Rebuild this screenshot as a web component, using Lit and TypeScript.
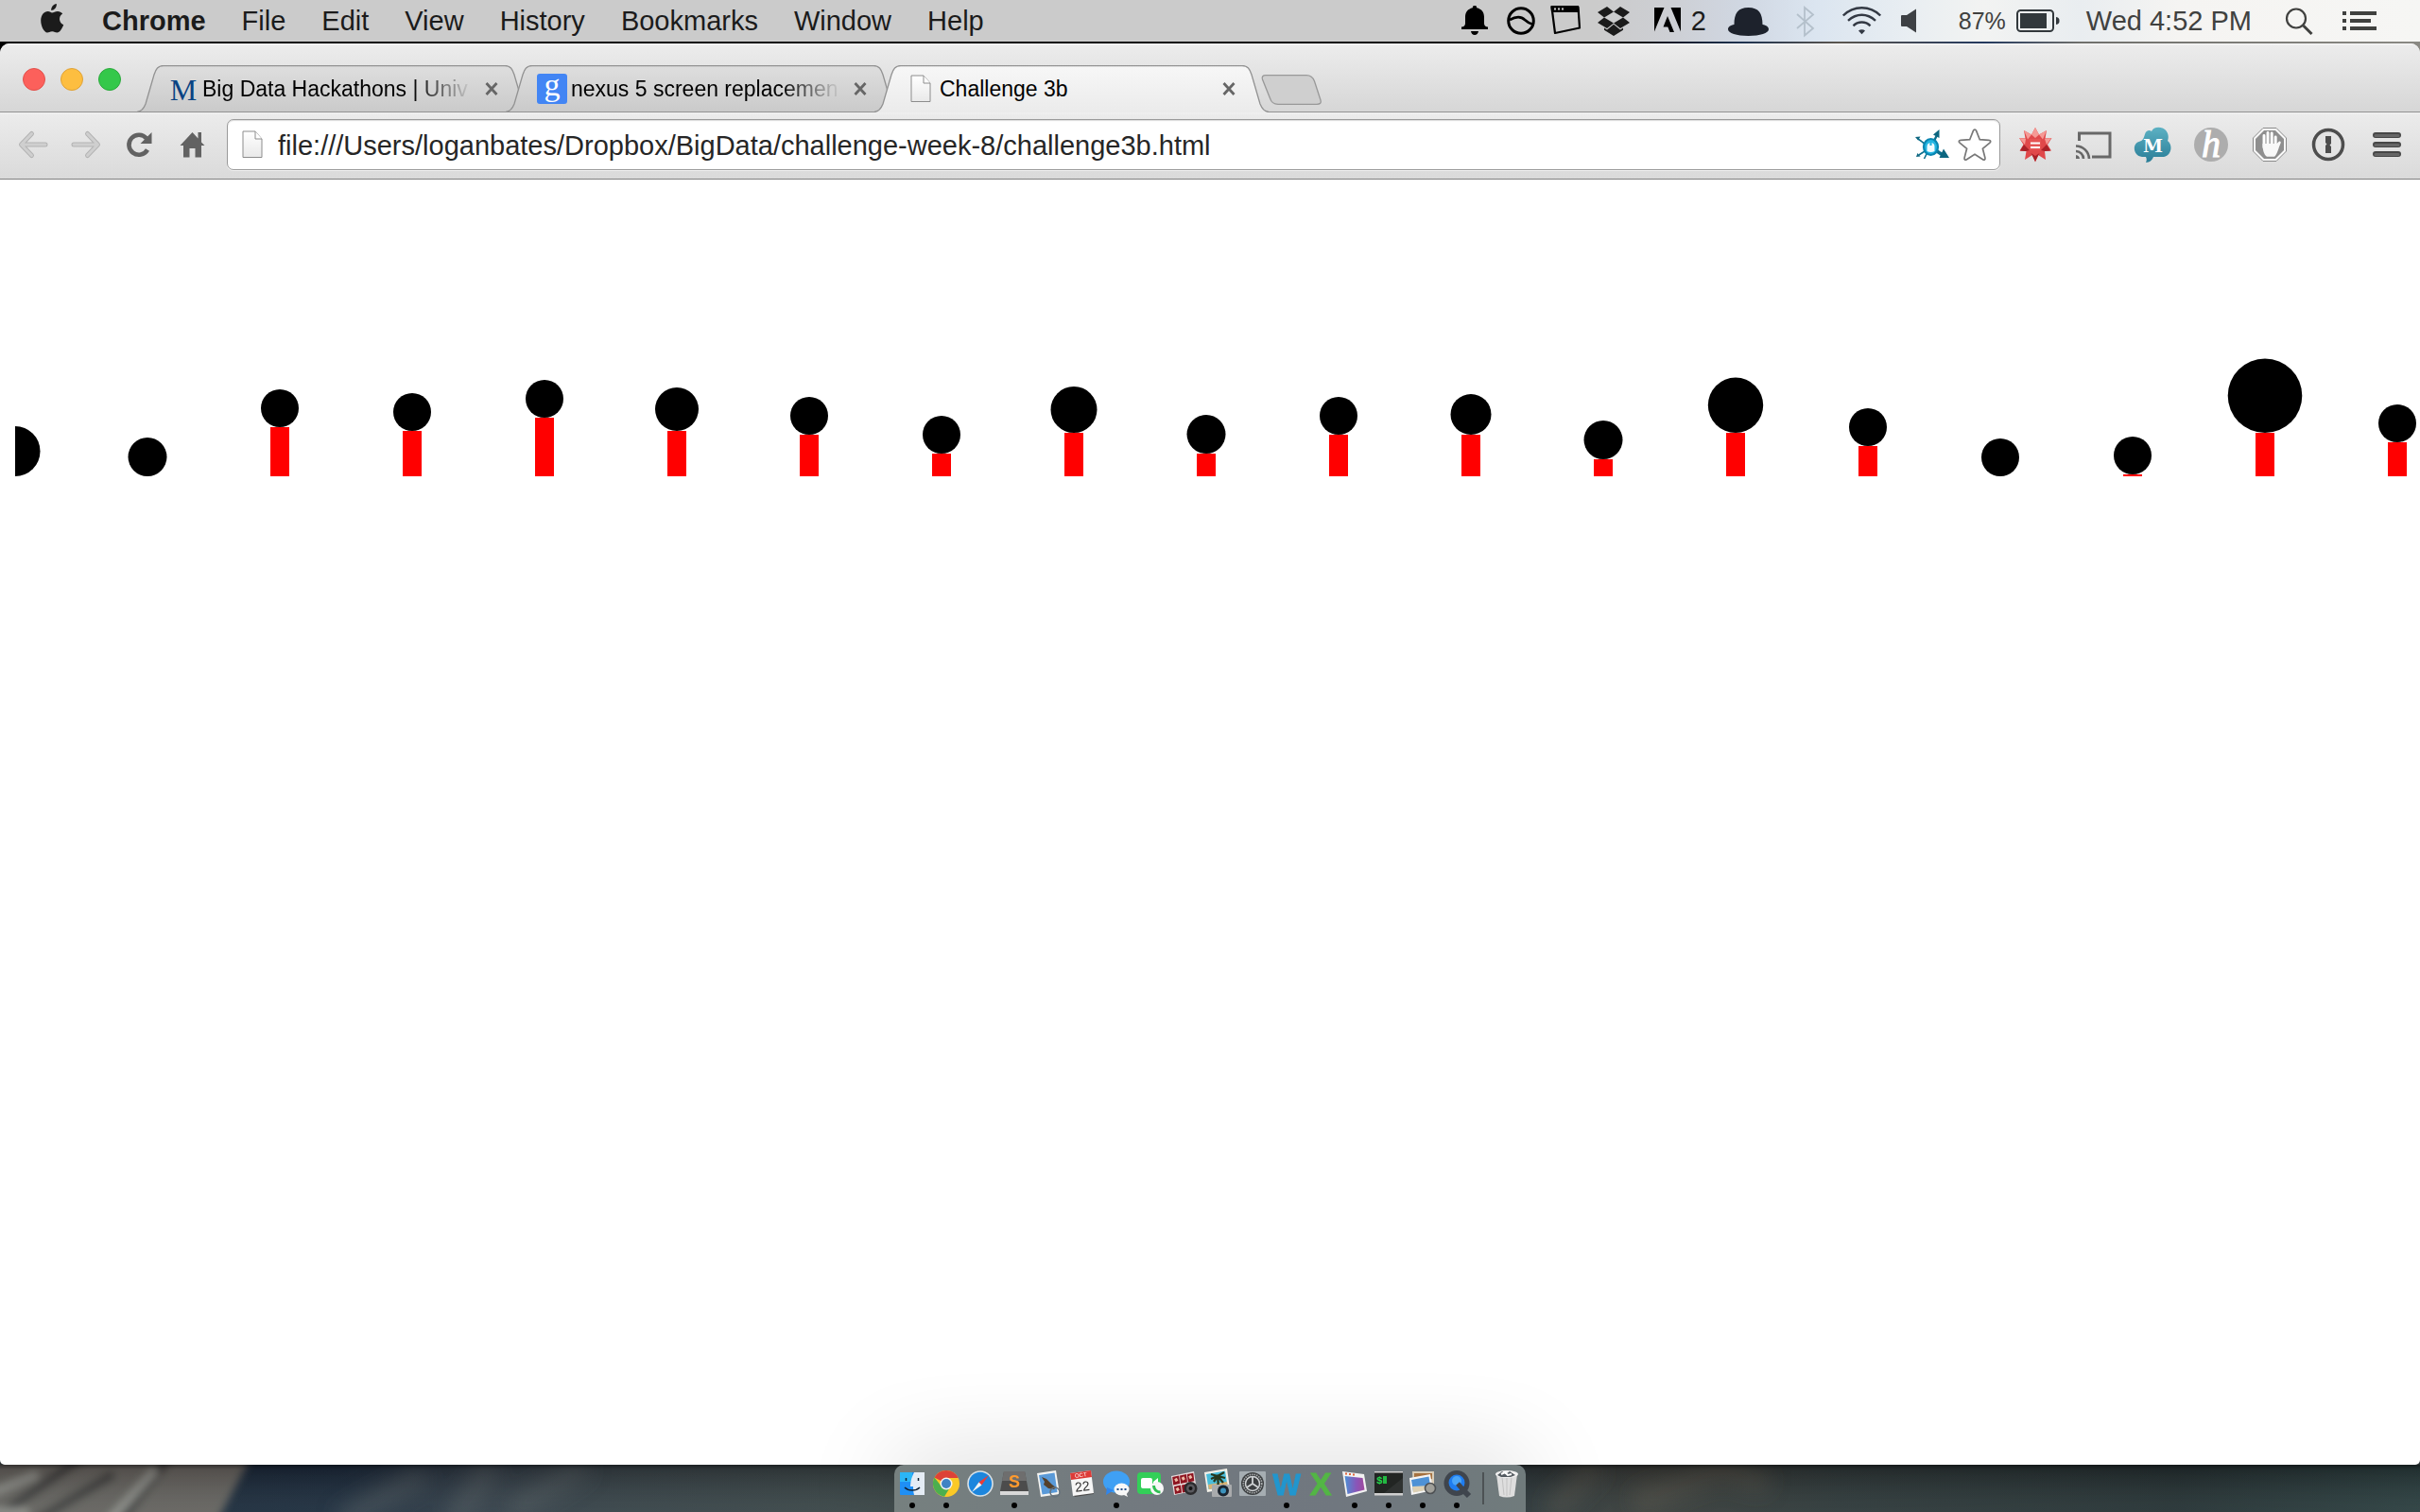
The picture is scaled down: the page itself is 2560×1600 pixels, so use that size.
import { LitElement, html, svg, css } from "lit";
import type { TemplateResult, SVGTemplateResult } from "lit";
import { customElement, property } from "lit/decorators.js";
import { classMap } from "lit/directives/class-map.js";

/** Inline icon whose view box has the same size as the drawn box. */
const icon = (w: number, h: number, body: SVGTemplateResult): TemplateResult =>
  html`<svg class="icon" width=${w} height=${h} viewBox="0 0 ${w} ${h}" aria-hidden="true">${body}</svg>`;

/* ---------- Menu bar ---------- */

const apple = icon(24, 44, svg`<g fill="#1b1b1b">
  <path d="M12 13.500c1.700 0 3.400-1.600 6-1.600 2 0 4 1 5.200 2.700-4.800 2.900-3.900 9.700 1 11.600-1.300 3.700-4 8.300-6.800 8.300-2 0-2.700-1.300-5.200-1.300s-3.400 1.300-5.200 1.300C3.800 34.500.2 28 .2 21.800c0-6.200 3.700-9.900 7.400-9.900 2.100 0 3.500 1.600 4.400 1.600z"/>
  <path d="M16.800 4c.4 3.800-2.600 7-5.600 7C10.800 7.600 13.600 4.400 16.800 4z"/></g>`);

const bell = icon(28, 44, svg`<path d="M14 6a2 2 0 0 1 2.200 2.200C21.500 9.500 24 13 24 18v7c0 2 1.500 3.300 4 3.500V31H0v-2.500C2.500 28.300 4 27 4 25v-7c0-5 2.500-8.500 7.800-9.800A2 2 0 0 1 14 6zM10 33h8c-.4 2.400-2 4-4 4s-3.600-1.600-4-4z"/>`);
const orbit = icon(30, 44, svg`<g fill="none" stroke="#000"><circle cx="17" cy="22" r="13.300" stroke-width="3"/><path d="M5 21c7-4 12-4 16 0 3 3 6 4 9 5" stroke-width="2.600"/></g>`);
const panel = icon(32, 44, svg`<path d="M1.500 7.500h28l1.500 22L5 35z" fill="none" stroke="#000" stroke-width="2.200" stroke-linejoin="round"/><path d="M.5 6h29.500l.5 7H1z"/><path d="M4 9.500h2M8 9.500h2M12 9.500h2" stroke="#ccc" stroke-width="2"/>`);
const dropbox = icon(42, 44, svg`<path fill="#1b1b1b" d="M10 7l7 5.500-10 6L0 13zM24 7l-7 5.500 10 6 7-5.500zM0 24l7-5.500 10 6L10 30zM34 24l-7-5.500-10 6 7 5.500zM17 25.800l7 5.600 3-1.900v2.200L17 38 7 31.700v-2.200l3 1.900z"/>`);
const adobe = icon(28, 44, svg`<path d="M0 8h10.500L0 33.500zM17.500 8H28v25.500zM14 17l7 17h-4.500l-2.200-5.500H9.500z"/>`);
const hat = icon(59, 44, svg`<path fill="#1d222c" d="M11.500 26c0-12 4-18 15-18s15 6 15 18c4 .5 6.500 2.500 6.500 5 0 4-9 7-21.500 7S5 35 5 31c0-2.500 2.500-4.500 6.500-5z"/>`);
const bluetooth = icon(31, 44, svg`<path d="M1 15l17 15-9 7.500V8l9 7.500-17 14.500" fill="none" stroke="#b4c0cb" stroke-width="1.800"/>`);
const wifi = icon(44, 44, svg`<g fill="none" stroke="#333944" stroke-width="2.400"><path d="M.8 16.500c11-11 28.400-11 39.400 0M6 21.800c9-8 20-8 29 0M11.500 27.300c5-5 13-5 18 0"/></g><path d="M17 32.500c2-1.800 5-1.800 7 0l-3.500 3.800z" fill="#333944"/>`);
const speaker = icon(43, 44, svg`<path fill="#3d4044" d="M0 17q0-1 1-1h5l10-6.500v25L6 28H1q-1 0-1-1z"/>`);
const battery = icon(56, 44, svg`<rect x="1" y="11" width="38" height="22" rx="3.500" fill="none" stroke="#32383c" stroke-width="2"/><rect x="4" y="14" width="28" height="16" fill="#32383c"/><path fill="#32383c" d="M42 18c3 .5 3.500 2 3.500 4s-.5 3.500-3.500 4z"/>`);
const search = icon(60, 44, svg`<g fill="none" stroke="#40413f"><circle cx="29" cy="19.500" r="10" stroke-width="2.200"/><path d="M36.500 27l9 9" stroke-width="3"/></g>`);
const list = icon(36, 44, svg`<path stroke="#40413f" stroke-width="4" d="M0 14h4M8 14h28M0 22h4M8 22h22M0 30h4M8 30h28"/>`);

/* ---------- Browser chrome ---------- */

const umich = icon(32, 32, svg`<text x="16" y="28" text-anchor="middle" font-family="Liberation Serif, serif" font-size="32" fill="#0a4383">M</text>`);
const google = icon(32, 32, svg`<rect width="32" height="32" rx="3" fill="#4285f4"/><text x="16" y="23" text-anchor="middle" font-family="Liberation Serif, serif" font-size="34" fill="#fff">g</text>`);
const pageShape = svg`<path d="M1 1h13l7 8v19.500H1z" fill="url(#pg)" stroke="#8c8c8c"/><path d="M14 1v8h7" fill="#fff" stroke="#8c8c8c"/><defs><linearGradient id="pg" x2="0" y2="1"><stop stop-color="#fff"/><stop offset="1" stop-color="#e9e9e9"/></linearGradient></defs>`;
const page = icon(22, 30, pageShape);
const pageFavicon = icon(32, 30, svg`<g transform="translate(5 0)">${pageShape}</g>`);
const close = icon(16, 16, svg`<path d="M2.500 2l11 12M13.500 2l-11 12" stroke="#666" stroke-width="2.800"/>`);

const back = icon(32, 32, svg`<path d="M13.500 4.500L2.500 16l11 11.500M3 16h25" fill="none" stroke="#b4b4b4" stroke-width="5" stroke-linecap="round" stroke-linejoin="round"/><path d="M13.500 4.500L2.500 16l11 11.500M3 16h25" fill="none" stroke="#cfcfcf" stroke-width="3" stroke-linecap="round" stroke-linejoin="round"/>`);
const forward = icon(32, 32, svg`<path d="M16.500 4.500l11 11.500-11 11.500M27 16H2" fill="none" stroke="#b4b4b4" stroke-width="5" stroke-linecap="round" stroke-linejoin="round"/><path d="M16.500 4.500l11 11.500-11 11.500M27 16H2" fill="none" stroke="#cfcfcf" stroke-width="3" stroke-linecap="round" stroke-linejoin="round"/>`);
const reload = icon(32, 32, svg`<path d="M24 21.500a10.500 10.500 0 1 1-1-12" fill="none" stroke="#626262" stroke-width="4.600"/><path d="M28.500 3v12H16.500z" fill="#626262"/>`);
const home = icon(32, 32, svg`<path fill="#626262" d="M15.500 3l6 6.500V3H25v10.500l3.500 3.500H25v12.500h-6.500V20h-6v9.500H6V17H2.500z"/>`);

const mouse = icon(36, 34, svg`<g stroke="#0d6f8d" fill="none" stroke-width="1.600"><path d="M10 16L3 11M10 24l-6 4M12 27l-2.500 5"/><path d="M20 13l3-6" stroke-width="2.400"/><path d="M23 24l6 4" stroke-width="3.600"/></g><path fill="#0d6680" d="M25.500 1v9L19 6.500zM0 9l5.500-.5L3 12.500zM1 30l1.500-4 3 3.500zM30 21.500L36 31H25.500z"/><ellipse cx="16.500" cy="19.500" rx="7.500" ry="8.500" fill="#23b5e2" stroke="#0885b0" stroke-width="2.200"/><path d="M12.500 24v-5c0-5.500 8-5.500 8 0v5q-4 2-8 0z" fill="#f0fbff"/><path d="M16.500 15v3" stroke="#27b3df" stroke-width="2.200"/>`);
const star = icon(36, 36, svg`<path d="M18 2.200c.8 0 1.300.5 1.600 1.200l3.700 9.300 9.600.6c2 .1 2.400 1.600 1 2.800l-7.500 6.200 2.500 9.700c.5 1.900-.9 2.700-2.400 1.700L18 28.300l-8.500 5.400c-1.500 1-2.900.2-2.400-1.700l2.500-9.700-7.500-6.200c-1.400-1.200-1-2.700 1-2.800l9.600-.6 3.700-9.300c.3-.7.8-1.200 1.600-1.200z" fill="#fff" stroke="#787878" stroke-width="1.700"/>`);

const burst = icon(38, 38, svg`<path fill="#e0484a" d="M19 1l4 7.500L31 4l-1.500 8.500 7-.5-4.500 7 4 6.500-7 .5 1 9-8-5-3 7.500-3-7.500-8 5 1.500-9-7-.5 4-6.500-4.500-7 6.500.5L7 4l8 4.500z"/><path fill="#f59a95" d="M19 1l4 7.500-4 3.500-4-3.500zM7 4l8 4.500-4 5zM31 4l-8 4.500 4 5zM2 12l7 1-1 6zM36 12l-7 1 2 6z"/><path fill="#a92128" d="M7 19l6 6-4 1-6-.5zM31 19l-6 6 4 1 6-.5zM14.500 28l4.500 9 4.500-9-4.500 3z"/><rect x="13" y="13" width="12" height="12" fill="#e55353"/><path d="M14 17.500h10M14 22h10" stroke="#fff" stroke-width="2.200"/>`);
const cast = icon(38, 38, svg`<g fill="none" stroke="#686868" stroke-width="3"><path d="M3.500 15V7H36v25H17"/></g><g fill="none" stroke="#686868" stroke-width="2.600"><path d="M0 20.500A14 14 0 0 1 14 34M0 26a8 8 0 0 1 8 8"/></g><path d="M0 30a4.500 4.500 0 0 1 4 4H0z" fill="#686868"/>`);
const cloud = icon(38, 38, svg`<defs><linearGradient id="sea" gradientUnits="userSpaceOnUse" x1="0" y1="0" x2="0" y2="38"><stop stop-color="#5db2c4"/><stop offset="1" stop-color="#2a7d97"/></linearGradient></defs><path fill="url(#sea)" d="M11 8c1-4 5-5 7-3 2-6 14-6 17 2 1 3 1 5 0 8 6 4 4 16-4 17H20c-1 3-4 6-8 6 1-2 1-4 0-6H8C-2 31-3 17 6 15.500c3-1 4-4 5-7.500z"/><text x="19.500" y="26.500" text-anchor="middle" font-family="DejaVu Serif, serif" font-weight="700" font-size="19" fill="#fff">M</text>`);
const letterH = icon(38, 38, svg`<circle cx="19" cy="19" r="18" fill="#adadad"/><text x="19" y="32" text-anchor="middle" font-family="Liberation Serif, serif" font-style="italic" font-size="40" fill="#fff" stroke="#fff">h</text>`);
const stop = icon(38, 38, svg`<path d="M12 1.500h14L36.500 12v14L26 36.500H12L1.500 26V12z" fill="#fafafa" stroke="#8a8a8a"/><path d="M13 4h12l9 9v12l-9 9H13l-9-9V13z" fill="#8f8f8f"/><path d="M13 22V9.500M17 20V6.500M21.200 20V7M25.200 21v-10" stroke="#fff" stroke-width="2.900" stroke-linecap="round"/><path d="M11.500 18h15l2-2c1.500-1.200 3 0 2 1.800-2 4-3.500 12-6.500 14h-8c-3.500-2.500-4.500-8-4.500-13.800z" fill="#f8f8f8"/>`);
const onePassword = icon(38, 38, svg`<circle cx="19" cy="19" r="15.500" fill="#e4e4e4" stroke="#4d4d4d" stroke-width="3.500"/><path fill="#4d4d4d" d="M16 10h6v8l-1.500 1.500L22 21v7h-6v-8l1.500-1.500L16 17z"/>`);
const menu = icon(38, 38, svg`<path d="M7 9h24M7 19h24M7 29h24" stroke="#464646" stroke-width="6" stroke-linecap="round"/><path d="M7 9.500h24M7 19.500h24M7 29.500h24" stroke="#666" stroke-width="3" stroke-linecap="round"/>`);

/* ---------- Dock ---------- */

interface DockApp { name: string; running: boolean; art: SVGTemplateResult }

const dockApps: DockApp[] = [
  { name: "Finder", running: true, art: svg`<rect x="1" y="2" width="26" height="24" rx="1" fill="#1f8ff5"/><rect x="1" y="2" width="13" height="10" fill="#2bb6f6"/><path d="M16 2h11v24H16c-1-4-1-7-1-9h-3c0-6 2-11 4-15z" fill="#e4ecf5"/><path d="M7.500 8v3M20.500 8v3M6 18c4 4 12 4 16 0" stroke="#123" stroke-width="1.500" fill="none"/>` },
  { name: "Chrome", running: true, art: svg`<circle cx="14" cy="14" r="14" fill="#fbc926"/><path d="M14 0a14 14 0 0 1 12.600 8H14v6L1.500 7.500A14 14 0 0 1 14 0z" fill="#dd4237"/><path d="M1.500 7.500A14 14 0 0 0 12 27.800L18 18l-9-1z" fill="#4caf4f"/><circle cx="14" cy="14" r="6.500" fill="#f3f3f3"/><circle cx="14" cy="14" r="5" fill="#3f83c4"/>` },
  { name: "Safari", running: false, art: svg`<circle cx="14" cy="14" r="13.800" fill="#d9e1e6"/><circle cx="14" cy="14" r="12.200" fill="#1d86dd"/><path d="M23 5l-7.500 10.500-3-3z" fill="#ee3b36"/><path d="M5 23l7.500-10.500 3 3z" fill="#f4f4f4"/>` },
  { name: "Sublime Text", running: true, art: svg`<path d="M3 1h22l4 21H-1z" fill="#4c4c4c"/><path d="M-1 22h30v4H-1z" fill="#d8d8d8"/><path d="M3 1h22l2 10H1z" fill="#6e6e6e"/><text x="14" y="18" text-anchor="middle" font-family="Liberation Sans, sans-serif" font-weight="700" font-size="18" fill="#ff9a2e">S</text>` },
  { name: "Mail", running: false, art: svg`<path d="M2 3l20-3 4 25-20 3z" fill="#f4f4f2"/><path d="M4 5l16.500-2.500 3 20.500-16 2.500z" fill="#5a9ad8"/><path d="M7 7l5 2 6 6 4 3-2 2-6-1-5-4 1-3z" fill="#54402b"/><circle cx="21" cy="23" r="5" fill="none" stroke="#66727c" stroke-width="1.500"/>` },
  { name: "Calendar", running: false, art: svg`<path d="M4 25l22-3v3l-20 3z" fill="#4c4c4c"/><path d="M1 3l22-3 3 24-22 3z" fill="#f6f6f6"/><path d="M1 3l22-3 1 7-22 3z" fill="#dd3b37"/><text x="12.500" y="7" text-anchor="middle" font-family="Liberation Sans, sans-serif" font-size="6" fill="#fff" transform="rotate(-7 12 7)">OCT</text><text x="14" y="22" text-anchor="middle" font-family="Liberation Sans, sans-serif" font-size="14" fill="#333" transform="rotate(-7 13 17)">22</text>` },
  { name: "Messages", running: true, art: svg`<ellipse cx="14" cy="12" rx="14" ry="11.500" fill="#3fa0f4"/><path d="M4 18l-1 8 8-5z" fill="#2f86ee"/><ellipse cx="19.500" cy="20" rx="8" ry="6.500" fill="#f8f8f8"/><path d="M24 23l2 5-6-3z" fill="#f8f8f8"/><path d="M14.500 20h2M18.500 20h2M22.500 20h2" stroke="#24508c" stroke-width="2.200"/>` },
  { name: "FaceTime", running: false, art: svg`<rect y="2" width="25" height="23" rx="4" fill="#33cf58"/><rect x="4" y="8" width="12" height="11" rx="2" fill="#fff"/><path d="M17 12l5-4v10l-5-4z" fill="#fff"/><circle cx="21" cy="19" r="7" fill="#f7f7f7"/><path d="M17.500 16c0 4 3 7 7 7" fill="none" stroke="#30be52" stroke-width="3"/>` },
  { name: "Photo Booth", running: false, art: svg`<path d="M0 6l24-5 3 20-24 5z" fill="#e8dcdc"/><path d="M1.200 7l7-1.400 1 8.500-7 1.400zM9 5.500l7-1.400 1 8.500-7 1.400zM16.800 4l6.500-1.300 1 8.500-6.500 1.300zM3 17l7-1.400 1 8-7 1.400zM11 15.500l7-1.400 1 8-7 1.400z" fill="#8e1420"/><path d="M4.500 8.500l1.500 3M12 7l1.500 3M19.500 5.500l1.500 3M6 18.500l1.500 3" stroke="#edbba5" stroke-width="3"/><circle cx="20.500" cy="19" r="7" fill="#2b2b2d"/><circle cx="20.500" cy="19" r="4.500" fill="#59595e"/><circle cx="20.500" cy="19" r="2" fill="#111"/>` },
  { name: "iPhoto", running: false, art: svg`<path d="M-1 2l24-4 3 21-24 4z" fill="#f3f1e9"/><path d="M1 4l20-3.500 2.500 16-20 3.500z" fill="#49bddb"/><path d="M3 15l20-3 .8 4.500-20 3.500z" fill="#d8b273"/><path d="M13 20c1-6 1-9 0-14M6 9l7-3 8 2M6 4l7 2 7-4M9 12l4-6 6 7" fill="none" stroke="#26371d" stroke-width="2.300"/><rect x="7" y="15" width="21" height="13" rx="1" fill="#a9abad"/><circle cx="19" cy="21.500" r="6" fill="#1a2530"/><circle cx="19" cy="21.500" r="3" fill="#3c93bd"/>` },
  { name: "System Preferences", running: false, art: svg`<rect y="1" width="28" height="26" rx="1" fill="#a5adb2"/><circle cx="14" cy="14" r="12" fill="#3c3f41"/><circle cx="14" cy="14" r="9.800" fill="none" stroke="#a8abad" stroke-width="1.600" stroke-dasharray="1.500 1"/><circle cx="14" cy="14" r="7.500" fill="none" stroke="#d0d3d5" stroke-width="1.500"/><path d="M14 14V7M14 14l-6 4M14 14l6 4" stroke="#d0d3d5" stroke-width="1.800"/>` },
  { name: "Word", running: true, art: svg`<text x="14" y="26" text-anchor="middle" font-family="Liberation Sans, sans-serif" font-weight="700" font-size="31" fill="#2196ce" stroke="#2196ce">W</text>` },
  { name: "Excel", running: false, art: svg`<text x="14" y="26" text-anchor="middle" font-family="Liberation Sans, sans-serif" font-weight="700" font-size="34" fill="#53b645" stroke="#53b645">X</text>` },
  { name: "CleanMyMac", running: true, art: svg`<defs><linearGradient id="glow"><stop stop-color="#4b8fd4"/><stop offset=".6" stop-color="#8a55b8"/><stop offset="1" stop-color="#a04a9c"/></linearGradient></defs><path d="M1 1l23 3 3 18-22 6z" fill="#f2f2f2"/><path d="M3.500 6l19 2 2 12.500-18 4.500z" fill="url(#glow)"/><path d="M4 3.500h2M8 4h2M12 4.500h2" stroke="#e0653c" stroke-width="2"/>` },
  { name: "Terminal", running: true, art: svg`<rect x="-1" y="2" width="30" height="22" fill="#222523"/><path d="M9 24L29 8v16z" fill="#2f3231"/><path d="M-1 24h30v2.500H-1zM-1 1h30v1.500H-1z" fill="#cfcfcf"/><text x="1" y="14" font-family="Liberation Mono, monospace" font-weight="700" font-size="11" fill="#22d84b">$</text><rect x="8" y="6" width="4" height="8" fill="#22b842"/>` },
  { name: "Preview", running: true, art: svg`<path d="M3 1h23v20L4 22z" fill="#d9cdb8"/><path d="M5 3h19v6L5 12z" fill="#a5713f"/><path d="M0 8l22-4 3 17-23 5z" fill="#f5f5f5"/><path d="M2 10l18.500-3.500 2 13L4 23z" fill="#4e92d6"/><path d="M3 17l18.500-1 .5 4L4 23.500z" fill="#ded1b4"/><circle cx="22" cy="19" r="5.500" fill="#a0a09a" stroke="#4e5154" stroke-width="1.600"/>` },
  { name: "QuickTime", running: true, art: svg`<circle cx="14" cy="13.500" r="13.500" fill="#3f454d"/><circle cx="14" cy="13" r="8.500" fill="#1f7df0"/><circle cx="14" cy="11" r="5" fill="#4aa5f8"/><path d="M15 14l8 9" stroke="#3f454d" stroke-width="5"/><path d="M19 19l8 8" stroke="#3f454d" stroke-width="6"/>` },
];

const trash = svg`<path d="M3 4l3 23q8 3 16 0l3-23z" fill="#dedede"/><path d="M9 7l2 19M14 7v20M19 7l-2 19" stroke="#c2c2c2" fill="none"/><ellipse cx="14" cy="4" rx="12" ry="4" fill="#f1f1f1"/><path d="M4 5l5-4 4 3 4-3 6 4-5 2H8z" fill="#555c62"/><path d="M8 4l4-2 3 3 4-1" stroke="#fff" stroke-width="2" fill="none"/>`;

/* ---------- Page data ---------- */

const baseline = 298;
const spacing = 140;
/** Bar height and circle radius of each sample, in drawing units. */
const samples: Array<[number, number]> = [
  [0, 26.5], [0, 20.5], [52, 20], [48, 20], [62, 20], [48, 23], [44, 20], [24, 20], [46, 24.5], [24, 20.5],
  [44, 20], [44, 21.5], [18, 20.5], [46, 29.2], [32, 20], [0, 20], [2, 20], [46, 39.3], [36, 20],
];

const resets = css`
  * { box-sizing: border-box; }
  button { font: inherit; color: inherit; background: none; border: 0; padding: 0; margin: 0; display: flex; align-items: center; }
  .icon { display: block; flex: none; overflow: visible; }
`;

@customElement("menu-bar")
export class MenuBar extends LitElement {
  static styles = [resets, css`
    :host {
      display: flex; justify-content: space-between; height: 44px; padding: 0 46px 0 43px;
      font: 29px/44px "Liberation Sans", sans-serif; color: #1b1b1b; white-space: nowrap;
      background: linear-gradient(90deg, #cbcbcb 66%, #cdcfd4 69%, #d0d7e2 72%, #dbe5f0 75%, #e9eef2 79%, #f2f3f2 82%, #e9edf0 86%, #f5f4f2 90%, #f6f6f4);
    }
    .menus { display: flex; gap: 38px; }
    .apple { margin-right: 3px; }
    .app { font-weight: 700; }
    .status { display: flex; gap: 18px; }
    .pair { gap: 11px; }
    .late { color: #40413f; }
    .charge { font-size: 25px; }
  `];
  render() {
    return html`
      <nav class="menus" aria-label="Application menu">
        <button class="apple" aria-label="Apple">${apple}</button>
        <button class="app">Chrome</button>
        ${["File", "Edit", "View", "History", "Bookmarks", "Window", "Help"].map((m) => html`<button>${m}</button>`)}
      </nav>
      <div class="status">
        <button aria-label="Notifications">${bell}</button>
        <button aria-label="Monitor">${orbit}</button>
        <button aria-label="Windows">${panel}</button>
        <button aria-label="Dropbox">${dropbox}</button>
        <button class="pair" aria-label="Adobe updates 2">${adobe}<span>2</span></button>
        <button aria-label="Bartender">${hat}</button>
        <button aria-label="Bluetooth">${bluetooth}</button>
        <button aria-label="Wi-Fi">${wifi}</button>
        <button aria-label="Volume">${speaker}</button>
        <button class="pair late"><span class="charge">87%</span>${battery}</button>
        <button class="late">Wed 4:52 PM</button>
        <button aria-label="Spotlight">${search}</button>
        <button aria-label="Notification Center">${list}</button>
      </div>`;
  }
}

@customElement("browser-tab")
export class BrowserTab extends LitElement {
  @property() label = "";
  @property({ type: Boolean }) active = false;
  @property({ attribute: false }) favicon?: TemplateResult;
  static styles = [resets, css`
    :host { display: block; position: relative; flex: 0 1 417px; min-width: 0; height: 50px; }
    .shape { position: absolute; inset: 0; width: 100%; height: 100%; }
    .row { position: relative; display: flex; align-items: center; height: 50px; padding: 0 34px 0 33px; gap: 4px; }
    .title {
      flex: 1; min-width: 0; margin-right: 8px; overflow: hidden; white-space: nowrap; text-align: left;
      font: 23px/50px "Liberation Sans", sans-serif; color: #000;
    }
    .fade { -webkit-mask-image: linear-gradient(90deg, #000 calc(100% - 64px), transparent); mask-image: linear-gradient(90deg, #000 calc(100% - 64px), transparent); }
  `];
  render() {
    const edge = "M0 49.5C5 49 7 46 9 41L18 10C20 4 22 .5 28 .5H389C395 .5 397 4 399 10L408 41C410 46 412 49 417 49.5";
    return html`
      <svg class="shape" viewBox="0 0 417 50" preserveAspectRatio="none" aria-hidden="true">
        <defs><linearGradient id="face" x2="0" y2="1">
          <stop stop-color=${this.active ? "#f7f7f7" : "#dedede"} />
          <stop offset="1" stop-color=${this.active ? "#ebebeb" : "#cacaca"} />
        </linearGradient></defs>
        <path d="${edge}V50H0z" fill="url(#face)" />
        <path d=${edge} fill="none" stroke="#929292" stroke-width="1.300" />
        ${this.active ? "" : svg`<path d="M0 49.500H417" stroke="#929292" />`}
      </svg>
      <div class="row">
        ${this.favicon}
        <button class=${classMap({ title: true, fade: !this.active })} role="tab" aria-selected=${this.active}>${this.label}</button>
        <button aria-label="Close tab">${close}</button>
      </div>`;
  }
}

@customElement("browser-window")
export class BrowserWindow extends LitElement {
  static styles = [resets, css`
    :host { display: flex; flex-direction: column; overflow: hidden; background: #fff; border-radius: 10px 10px 5px 5px; }
    .strip {
      display: flex; align-items: flex-end; height: 73px; padding-left: 24px;
      background: linear-gradient(#fafafa 0, #ececec 2px, #d6d6d6); box-shadow: inset 0 -1px #929292;
    }
    .lights { display: flex; gap: 16px; padding-bottom: 23px; margin-right: 17px; }
    .light { width: 24px; height: 24px; border-radius: 50%; border: 1px solid; }
    .red { background: #fc605b; border-color: #e2504b; }
    .yellow { background: #fdbe40; border-color: #dfa237; }
    .green { background: #34c84a; border-color: #2aa93b; }
    .tabs { display: flex; min-width: 0; flex: 0 1 1197px; }
    .tab + .tab { margin-left: -27px; }
    .front { z-index: 1; }
    .new { margin: 0 0 8px -8px; }
    .toolbar {
      display: flex; align-items: center; height: 71px; padding: 7px 16px 9px 20px; gap: 18px;
      background: linear-gradient(#f0f0f0 0, #ebebeb 3px, #dadada); border-bottom: 1px solid #808080;
    }
    .nav { display: flex; gap: 24px; margin-right: 2px; }
    .omnibox {
      display: flex; align-items: center; flex: 1; min-width: 0; height: 54px; padding: 0 8px 0 15px; gap: 9px;
      background: #fff; border: 1px solid #9a9a9a; border-radius: 7px; box-shadow: inset 0 1px 1px #ddd, 0 1px #f2f2f2;
    }
    .url {
      flex: 1; min-width: 0; border: 0; outline: 0; padding: 2px 0 0; margin-left: 7px; background: none;
      font: 29px/40px "Liberation Sans", sans-serif; color: #262626;
    }
    .extensions { display: flex; gap: 24px; }
    .page { flex: 1; padding: 16px 0 0 16px; }
    .chart { display: block; width: 100%; height: 298px; overflow: hidden; }
  `];
  render() {
    const extensions: Array<[string, TemplateResult]> = [
      ["Wolfram Alpha", burst], ["Google Cast", cast], ["Mendeley", cloud], ["Hypothesis", letterH],
      ["AdBlock", stop], ["1Password", onePassword], ["Customize", menu],
    ];
    return html`
      <header class="strip">
        <div class="lights">
          <button class="light red" aria-label="Close"></button>
          <button class="light yellow" aria-label="Minimize"></button>
          <button class="light green" aria-label="Zoom"></button>
        </div>
        <div class="tabs" role="tablist">
          <browser-tab class="tab" label="Big Data Hackathons | Univ" .favicon=${umich}></browser-tab>
          <browser-tab class="tab" label="nexus 5 screen replacemen" .favicon=${google}></browser-tab>
          <browser-tab class="tab front" active label="Challenge 3b" .favicon=${pageFavicon}></browser-tab>
        </div>
        <button class="new" aria-label="New tab">${icon(64, 32, svg`<path d="M5 .7H48C53 .7 55 3 56.500 7L63 27C64 30 62.500 31.300 59 31.300H18C13 31.300 11 29.500 9.500 25L1.500 5C.5 2 2 .7 5 .7z" fill="#cfcfcf" stroke="#989898" stroke-width="1.300"/>`)}</button>
      </header>
      <div class="toolbar">
        <div class="nav">
          <button aria-label="Back">${back}</button>
          <button aria-label="Forward">${forward}</button>
          <button aria-label="Reload">${reload}</button>
          <button aria-label="Home">${home}</button>
        </div>
        <div class="omnibox">
          ${page}
          <input class="url" aria-label="Address" spellcheck="false" .value=${"file:///Users/loganbates/Dropbox/BigData/challenge-week-8/challenge3b.html"} />
          <button aria-label="Pointer options">${mouse}</button>
          <button aria-label="Bookmark this page">${star}</button>
        </div>
        <div class="extensions">
          ${extensions.map(([name, art]) => html`<button aria-label=${name}>${art}</button>`)}
        </div>
      </div>
      <main class="page">
        <svg class="chart" role="img" aria-label="Bars topped with circles">
          ${samples.map(([bar, r], i) => svg`
            <rect x=${i * spacing - 10} y=${baseline - bar} width="20" height=${bar} fill="#f00"></rect>
            <circle cx=${i * spacing} cy=${baseline - bar - r} r=${r}></circle>`)}
        </svg>
      </main>`;
  }
}

@customElement("app-dock")
export class AppDock extends LitElement {
  static styles = [resets, css`
    :host {
      display: flex; height: 50px; padding: 0 2px 0 1px; border-radius: 10px 10px 0 0;
      background: linear-gradient(90deg, #76807f, #72797f 40%, #70777f 70%, #707b7c);
      box-shadow: 0 0 100px rgba(0, 0, 0, 0.2);
    }
    .app { width: 36px; flex-direction: column; padding-top: 6px; gap: 6px; }
    .dot { width: 6px; height: 6px; border-radius: 50%; background: #000; }
    .divider { width: 2px; margin: 8px 6px 8px 9px; background: #4c5254; }
  `];
  render() {
    return html`
      ${dockApps.map((a) => html`<button class="app" aria-label=${a.name}>${icon(28, 28, a.art)}${a.running ? html`<span class="dot"></span>` : ""}</button>`)}
      <span class="divider"></span>
      <button class="app" aria-label="Trash">${icon(28, 28, trash)}</button>`;
  }
}

@customElement("app-root")
export class AppRoot extends LitElement {
  static styles = [resets, css`
    :host {
      display: flex; flex-direction: column; min-height: 100vh;
      background: linear-gradient(90deg, #000 66%, #1f3350 72%, #5b564f 76%, #24395e 82%, #70706c 86%, #8a8983);
    }
    .window { flex: 1; margin-top: 2px; z-index: 1; }
    .desktop { position: relative; display: flex; justify-content: center; height: 50px; margin-top: -10px; box-sizing: content-box; border-top: 10px solid #2a3032; }
    .wallpaper { position: absolute; inset: 0; width: 100%; height: 100%; }
    .dock { position: relative; z-index: 2; }
  `];
  render() {
    return html`
      <menu-bar></menu-bar>
      <browser-window class="window"></browser-window>
      <footer class="desktop">
        <svg class="wallpaper" viewBox="0 0 2560 50" preserveAspectRatio="none" aria-hidden="true">
          <defs>
            <linearGradient id="sky">
              <stop stop-color="#1a2738" /><stop offset=".14" stop-color="#1e2b3c" /><stop offset=".2" stop-color="#343d47" />
              <stop offset=".26" stop-color="#394247" /><stop offset=".36" stop-color="#3c4546" /><stop offset=".63" stop-color="#30383b" />
              <stop offset=".68" stop-color="#3b3c39" /><stop offset=".76" stop-color="#2f3738" /><stop offset=".9" stop-color="#263032" />
              <stop offset="1" stop-color="#2c3d3e" />
            </linearGradient>
            <linearGradient id="shade" x2="0" y2="1">
              <stop stop-color="#000" stop-opacity=".5" /><stop offset=".1" stop-color="#000" stop-opacity=".2" /><stop offset="1" stop-color="#8aa" stop-opacity=".1" />
            </linearGradient>
            <filter id="soft" x="-20%" y="-50%" width="140%" height="200%"><feGaussianBlur stdDeviation="4" /></filter>
            <filter id="haze" x="-20%" y="-80%" width="140%" height="260%"><feGaussianBlur stdDeviation="11" /></filter>
            <clipPath id="frame"><rect width="2560" height="50" /></clipPath>
          </defs>
          <rect width="2560" height="50" fill="url(#sky)" />
          <g clip-path="url(#frame)">
            <g filter="url(#soft)">
              <path d="M-30 -20H272L224 70H-30z" fill="#67635e" />
              <path d="M-10 60L90 -10M120 70L180 -10M20 70L120 10" stroke="#3d3b3a" stroke-width="9" />
              <path d="M-10 30L40 10M-10 50H30M115 60L165 5" stroke="#94938d" stroke-width="8" />
            </g>
            <g filter="url(#haze)" fill="none">
              <path d="M360 60L450 10M480 60L520 0M540 50L620 0" stroke="#5a6064" stroke-width="22" opacity=".5" />
              <path d="M1640 50L1690 0M1730 40L1820 5L1870 20" stroke="#5c564b" stroke-width="22" opacity=".5" />
            </g>
          </g>
          <rect width="2560" height="50" fill="url(#shade)" />
        </svg>
        <app-dock class="dock"></app-dock>
      </footer>`;
  }
}
